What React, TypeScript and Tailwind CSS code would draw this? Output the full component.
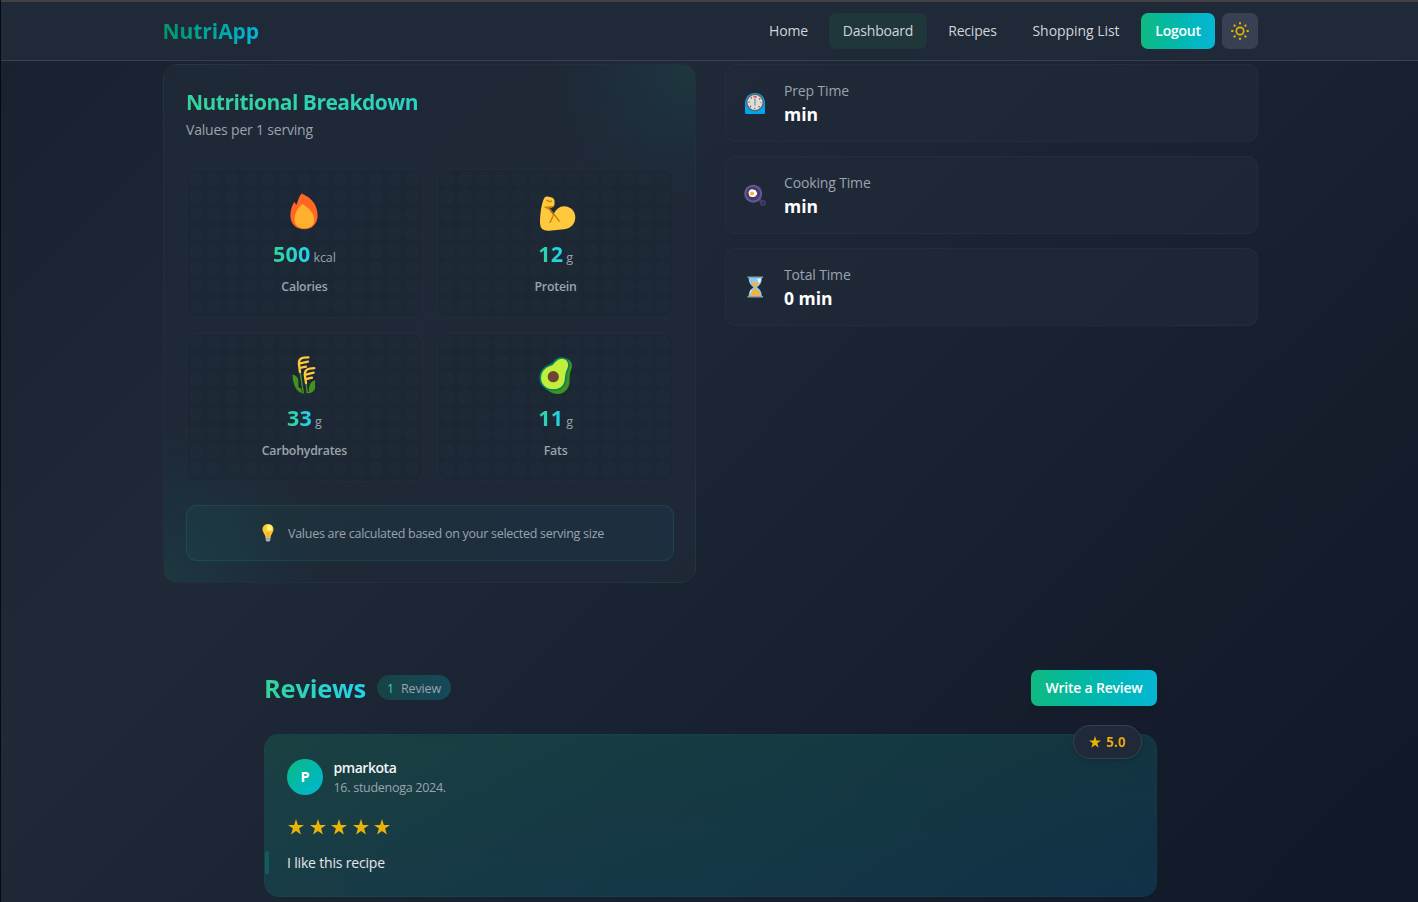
import type { ReactNode } from 'react';

const Flame = () => (
  <svg viewBox="0 0 40 40" className="size-10">
    <path d="M17.6 2.4C24 5 33.600 11 33.600 24.500C33.600 33 28 38.300 20.300 38.300C12 38.300 6.400 33 6.400 24.500C6.400 19 8.200 14 10.400 10.700C11.200 12.200 11.900 13.200 12.400 14C13.600 10.700 14.700 6 17.600 2.400Z" fill="#ff6723" />
    <path d="M18.600 13.200C23 15.500 30.300 21.500 30.300 28.700C30.300 34 26.500 37.300 20.600 37.300C14.500 37.300 10.600 34 10.600 28.500C10.600 22.500 13.600 16.200 18.600 13.200Z" fill="#ffb02e" />
  </svg>
);

const Muscle = () => (
  <svg viewBox="0 -1.200 40 40" className="size-10">
    <path d="M8.500 5.500Q9.300 4 11.500 4.300L15 5Q18.700 6 18.500 9.500V12Q18.300 15 15 15.500L12 15.800L17.200 22.500Q21 14 28 14C35 14 39.300 19 39.300 25C39.300 31.500 35 36.200 28 37L13 38.500Q4.300 39 4 31C4 22 5.500 10 8.500 5.500Z" fill="#ffc83d" />
    <path d="M8 14.500L16.800 13.900Q18.500 13 18.600 10.500L18.400 12.800Q17.500 15.500 14.500 15.700L12.500 16L14 18L8.800 15.600Z" fill="#d67d00" />
    <path d="M11 8.200L13.800 9.500L15.600 9M13 15.600L23.300 29M17.700 22.500L14 30.300" fill="none" stroke="#c87600" strokeWidth="1.200" strokeLinecap="round" />
  </svg>
);

const Wheat = () => (
  <svg viewBox="0 0 40 40" className="size-10">
    <path d="M8.500 19.500Q13.800 20.500 14.300 25.500L14.500 32.300L17.500 33.700L18 38.400Q9 35 8.500 19.500Z" fill="#44911b" />
    <path d="M31 25Q25.500 27 25 33L24.800 36.500L22.700 38.300Q30.500 38.500 31.200 32.500Z" fill="#44911b" />
    <path d="M16 16L19.400 38.500M22.200 28L23.200 38" fill="none" stroke="#44911b" strokeWidth="1.500" />
    <path d="M16 17L14.900 9Q14.500 3.500 20 2.700L24.400 2.400M16 8.300L24 6.600M16 12.800L22 11.700" fill="none" stroke="#ffc83d" strokeWidth="2.300" strokeLinecap="round" />
    <path d="M22 28L20.800 20Q20.400 14.500 25.600 13.600L30.300 13.100M22 19.600L29.600 17.700M22 24.200L28 22.700" fill="none" stroke="#ffc83d" strokeWidth="2.300" strokeLinecap="round" />
  </svg>
);

const Avocado = () => (
  <svg viewBox="0 0 40 40" className="size-10">
    <path d="M27 3C34 3 37.500 8.500 35.500 14Q33.300 18 33.600 23C34.500 33 29 39 21.500 39Q14 38.500 9 33Z" fill="#44911b" />
    <path d="M25.300 2.200C31.200 2 35.500 7.800 33.200 13.500Q30.700 18 30.600 22.500C30.800 31 25 36 17.500 36C9.500 36 3.400 30.500 3.400 23C3.400 17.300 6.800 12 12.500 9.800Q16 9.200 18.500 5.500Q21.300 2.200 25.300 2.200Z" fill="#008463" />
    <path d="M25.700 3.800C30.300 3.800 33.400 8 31.700 12.500Q29.300 17 29 22C29 30 24.500 34.300 17.600 34.300C10.300 34.300 5.100 29.600 5.100 23C5.100 17.800 8.300 13 13.800 11.200Q17.300 10.200 20 6.500Q22.300 3.800 25.700 3.800Z" fill="#c3ef3c" />
    <circle cx="17.300" cy="21.700" r="5.600" fill="#6d4534" />
  </svg>
);

const Bulb = () => (
  <svg viewBox="0 0 20 20" className="size-5">
    <path d="M10 1C13.400 1 15.500 3.400 15.500 6.500C15.500 9.300 13.200 10.500 12.600 13.800V15H7.500V13.800C6.800 10.500 4.500 9.300 4.500 6.500C4.500 3.400 6.600 1 10 1Z" fill="#fcc930" />
    <circle cx="11.500" cy="5" r="2.900" fill="#fff478" />
    <path d="M9 9.500L9.600 14M11.200 9.500L10.600 14" stroke="#e19747" strokeWidth=".7" />
    <path d="M7.700 14.500H12.400V17L11.300 18.600H8.800L7.700 17Z" fill="#b4b8bf" />
    <path d="M7.700 16H12.400" stroke="#83868f" strokeWidth=".7" />
  </svg>
);

const TimerClock = () => (
  <svg viewBox="0 0 24 24" className="size-6">
    <path d="M2 12.500C2 6 6.200 1.900 12 1.900S22 6 22 12.500V21.400Q22 22.900 20.500 22.900H3.500Q2 22.900 2 21.400Z" fill="#00a6ed" />
    <circle cx="12" cy="11.500" r="8.900" fill="#636363" />
    <circle cx="12" cy="11.500" r="7.500" fill="#dcdcdc" />
    <circle cx="12" cy="11.500" r="5.900" fill="none" stroke="#4c4c4c" strokeWidth="1.400" strokeDasharray="1 3.633" strokeDashoffset=".5" />
    <rect x="11" y="7.300" width="2" height="7.500" rx=".8" fill="#a8a8a8" />
    <rect x="10.300" y="5.200" width="3.400" height="1.300" fill="#f8434d" />
  </svg>
);

const Pan = () => (
  <svg viewBox="0 0 24 24" className="size-6">
    <path d="M16 16L19.400 19.600" stroke="#433b6b" strokeWidth="3.400" />
    <circle cx="20" cy="20" r="2" fill="none" stroke="#433b6b" strokeWidth="2" />
    <circle cx="10.200" cy="10.700" r="9" fill="#635994" />
    <circle cx="10.200" cy="10.700" r="6.900" fill="#433b6b" />
    <path d="M6.200 7.700Q8.500 5.500 11 6.800Q13.500 7 13.500 9Q15.200 10.300 13.600 12Q12.500 14.500 9.500 14Q6.300 14.300 5.800 11.500Q5 9.300 6.200 7.700Z" fill="#fff" />
    <circle cx="9" cy="10.500" r="2" fill="#ffb02e" />
  </svg>
);

const Hourglass = () => (
  <svg viewBox="0 0 24 24" className="size-6">
    <path d="M5.700 3H18.800C18.800 8.500 16.500 10.200 14 12.200C16.500 14.200 18.800 16 18.800 21.200H5.700C5.700 16 8 14.200 10.500 12.200C8 10.200 5.700 8.500 5.700 3Z" fill="#83cbff" />
    <path d="M14.500 3.500H18C18 7.500 16 9 13.500 11C15 8.500 15.500 6.500 14.500 3.500ZM9 14.500L7 19L7 15.800Z" fill="#e4f4ff" />
    <path d="M7.600 7.500H16.500Q15.500 9.500 13.200 11.100L12.900 14.200Q16.800 16 17.600 20.600H7Q7.800 16.500 11.600 14.200L11.300 11.100Q8.600 9.600 7.600 7.500Z" fill="#ffb02e" />
    <path d="M4.500 2.200H20M4.500 21.800H20" stroke="#9b9b9b" strokeWidth="1.500" />
  </svg>
);

const Sun = () => (
  <svg viewBox="0 0 18 18" className="size-[18px]" fill="none" stroke="#eab308">
    <circle cx="9" cy="9" r="3.700" strokeWidth="1.700" />
    <g strokeWidth="2" strokeLinecap="round">
      <path d="M9 1V1.600M9 16.400V17M1 9H1.600M16.400 9H17M3.400 3.400L3.800 3.800M14.200 14.200L14.600 14.600M14.600 3.400L14.200 3.800M3.800 14.200L3.400 14.600" />
    </g>
  </svg>
);

const Star = ({ className }: { className: string }) => (
  <svg viewBox="0 0 16 16" className={className} fill="#eab308">
    <path d="M8 0L9.900 5.900H16L11.100 9.600L12.900 15.500L8 11.900L3.100 15.500L4.900 9.600L0 5.900H6.100Z" />
  </svg>
);

const Nutrient = ({ icon, value, unit, label }: { icon: ReactNode; value: string; unit: string; label: string }) => (
  <div className="flex h-[149.500px] flex-col items-center overflow-hidden rounded-[11px] border border-[#374151]/20 bg-[#1a2332]/30 bg-[radial-gradient(circle,rgba(16,185,129,0.018)_6.500px,transparent_7.500px)] bg-[size:18px_18px] pt-[21px]">
    {icon}
    <div className="mt-[7px] flex h-[31px] items-baseline gap-[3px]">
      <span className="bg-gradient-to-r from-[#34d399] to-[#22d3ee] bg-clip-text text-[21.500px] leading-[31px] font-bold tracking-[0.2px] text-transparent">{value}</span>
      <span className="text-[12.500px] tracking-[-0.1px] text-[#9ca3af]">{unit}</span>
    </div>
    <div className="mt-[8px] text-[12.300px] leading-5 font-semibold tracking-[-0.2px] text-[#9ca3af]">{label}</div>
  </div>
);

const TimeCard = ({ icon, label, value }: { icon: ReactNode; label: string; value: string }) => (
  <div className="flex h-[77.600px] items-center gap-[17px] rounded-[11px] border border-[#374151]/25 bg-[#1f2937]/70 pl-[17px]">
    {icon}
    <div className="flex flex-col">
      <span className="text-[14px] leading-[22px] tracking-[-0.15px] text-[#9ca3af]">{label}</span>
      <span className="text-[17.500px] leading-[25px] font-bold text-white">{value}</span>
    </div>
  </div>
);

export default function App() {
  return (
    <div className="h-[902px] w-full overflow-hidden border-l border-[#070a12] bg-[linear-gradient(135deg,#111827_-32%,#1f2937_32%,#111827_97%)] font-['Open_Sans','Noto_Sans',sans-serif]">
      <header className="h-[61px] border-t-2 border-b border-t-[#424244] border-b-[#374151] bg-[#1f2937] pl-[162px]">
        <div className="flex h-[58px] w-[1095px] items-center justify-between">
          <span className="-ml-[0.500px] bg-gradient-to-r from-[#059669] to-[#06b6d4] bg-clip-text text-[21px] leading-8 font-bold tracking-[-0.05px] text-transparent">NutriApp</span>
          <nav className="flex gap-[7px] text-[14px] leading-9 tracking-[-0.2px] text-[#d1d5db] *:h-9 *:rounded-[7px] *:text-center">
            <a className="w-[67px]">Home</a>
            <a className="w-[98px] bg-[#1f363b]">Dashboard</a>
            <a className="w-[77px]">Recipes</a>
            <a className="w-[116px] tracking-[-0.05px]">Shopping List</a>
            <button className="w-[74px] bg-gradient-to-r from-[#10b981] to-[#06b6d4] font-semibold tracking-[-0.25px] text-white">Logout</button>
            <button className="flex w-9 items-center justify-center bg-[#374151]"><Sun /></button>
          </nav>
        </div>
      </header>

      <main className="pt-[3.400px]">
        <div className="ml-[162px] flex w-[1095px] items-start gap-[29px]">
          <section className="h-[518.600px] w-[533px] rounded-[15px] border border-[#374151]/25 bg-[radial-gradient(circle_at_100%_0%,rgba(16,185,129,0.1),rgba(6,182,212,0.035)_75px,transparent_140px),radial-gradient(circle_at_0%_100%,rgba(16,185,129,0.1),rgba(6,182,212,0.045)_80px,transparent_160px)] bg-[#1f2937]/80 px-[22px] pt-[21.600px]">
            <h2 className="bg-gradient-to-r from-[#34d399] to-[#22d3ee] bg-clip-text text-[21px] leading-[30px] font-bold tracking-[-0.5px] text-transparent">Nutritional Breakdown</h2>
            <p className="mt-[2px] text-[14px] leading-[22px] tracking-[-0.2px] text-[#9ca3af]">Values per 1 serving</p>
            <div className="-mr-px mt-[28px] grid grid-cols-2 gap-[14.400px]">
              <Nutrient icon={<Flame />} value="500" unit="kcal" label="Calories" />
              <Nutrient icon={<Muscle />} value="12" unit="g" label="Protein" />
              <Nutrient icon={<Wheat />} value="33" unit="g" label="Carbohydrates" />
              <Nutrient icon={<Avocado />} value="11" unit="g" label="Fats" />
            </div>
            <div className="-mr-px mt-[22.600px] flex h-14 items-center justify-center gap-[10px] rounded-[11px] border border-[#10b981]/15 bg-[linear-gradient(to_right,rgba(16,185,129,0.055),rgba(14,165,233,0.06))] pl-[2px]">
              <Bulb />
              <span className="mt-[2px] text-[12.500px] tracking-[-0.27px] text-[#9ca3af]">Values are calculated based on your selected serving size</span>
            </div>
          </section>

          <section className="flex w-[533px] flex-col gap-[14.400px]">
            <TimeCard icon={<TimerClock />} label="Prep Time" value="min" />
            <TimeCard icon={<Pan />} label="Cooking Time" value="min" />
            <TimeCard icon={<Hourglass />} label="Total Time" value="0 min" />
          </section>
        </div>

        <section className="mt-[87px] ml-[263px] w-[893px]">
          <div className="flex h-9 items-center">
            <h2 className="bg-gradient-to-r from-[#34d399] to-[#22d3ee] bg-clip-text text-[25.500px] leading-9 font-bold tracking-[-0.25px] text-transparent">Reviews</h2>
            <div className="ml-[11px] flex h-[25px] w-[74px] items-center justify-center gap-[7px] rounded-full bg-gradient-to-r from-[#10b981]/20 to-[#06b6d4]/25 pt-[2px] text-[12.500px] tracking-[-0.15px]">
              <span className="text-[#34d399]">1</span>
              <span className="text-[#9ca3af]">Review</span>
            </div>
            <button className="ml-auto h-9 w-[126px] rounded-[7px] bg-gradient-to-r from-[#10b981] to-[#06b6d4] pb-px text-[14px] font-semibold tracking-[-0.22px] text-white shadow-md">Write a Review</button>
          </div>

          <article className="relative mt-[28px] h-[163px] rounded-[15px] border border-[#10b981]/5 bg-[linear-gradient(to_bottom_right,rgba(16,185,129,0.18),rgba(10,150,200,0.19))] px-[22px] pt-[24px]">
            <div className="absolute -top-[10px] right-[14px] flex h-[34px] w-[69px] items-center justify-center gap-[5px] rounded-full border border-[#374151] bg-[#1f2937] shadow-md">
              <Star className="h-3 w-3" />
              <span className="bg-gradient-to-r from-[#eab308] to-[#f59e0b] bg-clip-text text-[13.500px] font-bold text-transparent">5.0</span>
            </div>
            <div className="flex h-9 items-center gap-[10.500px]">
              <div className="flex size-9 items-center justify-center rounded-full bg-gradient-to-br from-[#10b981] to-[#06b6d4] text-[14.500px] font-bold text-white">P</div>
              <div className="flex flex-col pt-[3px]">
                <span className="text-[14px] leading-5 font-semibold tracking-[-0.45px] text-[#f3f4f6]">pmarkota</span>
                <span className="text-[12.500px] leading-5 tracking-[-0.28px] text-[#9ca3af]">16. studenoga 2024.</span>
              </div>
            </div>
            <div className="mt-[24px] flex h-4 gap-[5.600px] pl-px">
              {[0, 1, 2, 3, 4].map((i) => <Star key={i} className="size-4" />)}
            </div>
            <p className="relative mt-[16px] h-[23px] text-[14px] leading-[24px] tracking-[-0.18px] text-[#e5e7eb]">
              <span className="absolute top-0 -left-[22px] h-[23px] w-1 rounded-sm bg-gradient-to-b from-[#10b981]/25 to-[#06b6d4]/25" />
              I like this recipe
            </p>
          </article>
        </section>
      </main>
    </div>
  );
}
